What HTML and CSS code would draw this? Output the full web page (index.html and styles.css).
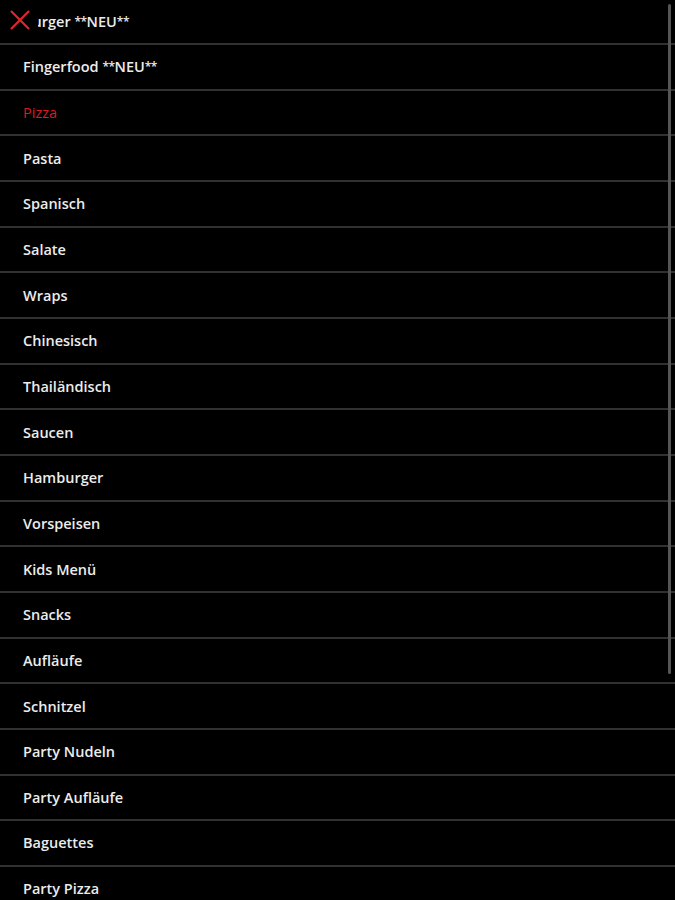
FILE: index.html
```html
<!DOCTYPE html>
<html lang="de">
<head>
<meta charset="utf-8">
<title>Kategorien</title>
<link rel="stylesheet" href="styles.css">
</head>
<body>
<div class="panel">
  <ul class="menu">
    <li class="item">Burger <span class="star">**</span>NEU<span class="star">**</span></li>
    <li class="item">Fingerfood <span class="star">**</span>NEU<span class="star">**</span></li>
    <li class="item active">Pizza</li>
    <li class="item">Pasta</li>
    <li class="item">Spanisch</li>
    <li class="item">Salate</li>
    <li class="item">Wraps</li>
    <li class="item">Chinesisch</li>
    <li class="item">Thailändisch</li>
    <li class="item">Saucen</li>
    <li class="item">Hamburger</li>
    <li class="item">Vorspeisen</li>
    <li class="item">Kids Menü</li>
    <li class="item">Snacks</li>
    <li class="item">Aufläufe</li>
    <li class="item">Schnitzel</li>
    <li class="item">Party Nudeln</li>
    <li class="item">Party Aufläufe</li>
    <li class="item">Baguettes</li>
    <li class="item">Party Pizza</li>
  </ul>
  <button class="close" aria-label="Schließen">
    <svg width="22" height="22" viewBox="0 0 22 22"><path d="M2 2 L20 20 M20 2 L2 20" stroke="#e3262e" stroke-width="2.2" fill="none"/></svg>
  </button>
  <div class="scrollbar"></div>
</div>
</body>
</html>
```
FILE: styles.css
```css
html, body {
  margin: 0;
  padding: 0;
  background: #000;
}
body {
  font-family: "Open Sans", "Liberation Sans", sans-serif;
  width: 675px;
  height: 900px;
  overflow: hidden;
}
.panel {
  position: relative;
  height: 900px;
  overflow: hidden;
}
.menu {
  list-style: none;
  margin: 0;
  padding: 0;
}
.item {
  box-sizing: border-box;
  height: 45.67px;
  padding: 0 0 0 23px;
  display: flex;
  align-items: center;
  border-bottom: 2px solid #313131;
  color: #ececec;
  font-size: 14.5px;
  font-weight: 600;
  letter-spacing: 0;
  white-space: pre;
}
.star {
  font-size: 12px;
  letter-spacing: -0.5px;
}
.item:first-child {
  height: 45px;
}
.item.active {
  color: #db1a22;
  font-weight: 400;
}
.close {
  position: absolute;
  left: 0;
  top: 0;
  width: 38px;
  height: 40px;
  padding: 0;
  border: 0;
  background: #000;
  display: flex;
  align-items: center;
  justify-content: center;
  padding-left: 2px;
}
.scrollbar {
  position: absolute;
  right: 4px;
  top: 4px;
  width: 3px;
  height: 670px;
  background: #555;
  border-radius: 2px;
}
```
